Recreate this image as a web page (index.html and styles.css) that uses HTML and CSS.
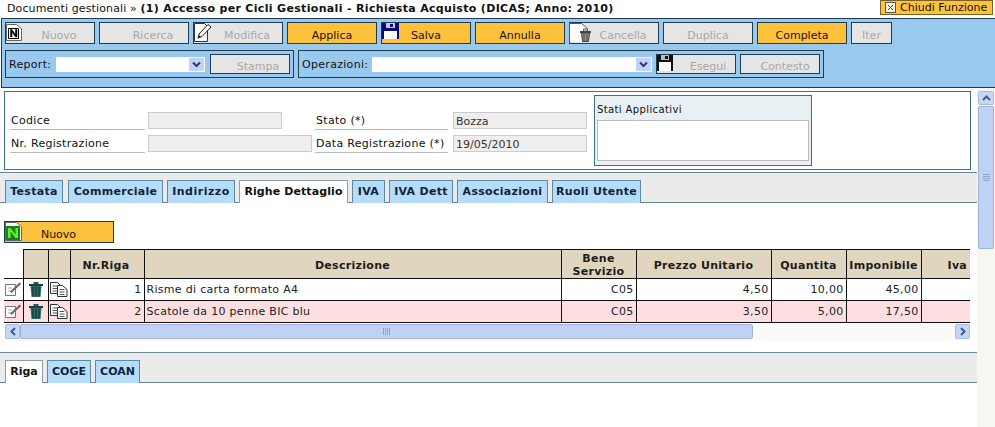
FILE: index.html
```html
<!DOCTYPE html>
<html lang="it">
<head>
    <meta charset="UTF-8">
    <title>Documenti gestionali</title>
    <link rel="stylesheet" href="styles.css">
</head>
<body>
    <div class="top-bar">
        <div class="path">Documenti gestionali &raquo; <b>(1) Accesso per Cicli Gestionali - Richiesta Acquisto (DICAS; Anno: 2010)</b></div>
        <a class="close-link">
            <svg class="close-icon" width="11" height="11" viewBox="0 0 11 11"><rect x=".5" y=".5" width="10" height="10" fill="#f4f1df" stroke="#555"/><path d="M3 3l5 5M8 3l-5 5" stroke="#444" fill="none"/></svg>
            Chiudi Funzione
        </a>
    </div>

    <div class="toolbar">
        <div class="btn-row">
            <button class="btn off text-shift">
                <svg class="ico ico-n" width="16" height="17" viewBox="0 0 16 17"><path d="M.5.5h10l5 4v12H.5z" fill="#fff" stroke="#666"/><path d="M2.500 4.500h10v10h-10z" fill="#fff" stroke="#000"/><path d="M4.500 13V5.500h1.500l3.500 5v-5h1.500V13H9.500L6 8v5z" fill="#000" stroke="#000" stroke-width=".5"/></svg>
                Nuovo
            </button>
            <button class="btn off text-shift">Ricerca</button>
            <button class="btn off text-shift">
                <svg class="ico ico-edit" width="20" height="20" viewBox="0 0 20 20"><path d="M.5.5h10l3 3v15H.5z" fill="#fff" stroke="#333"/><path d="M4 15l1-4L14 1.500l3 2.500-9 9.500z" fill="#fff" stroke="#222"/><path d="M4 15l1-3 2 2z" fill="#222"/></svg>
                Modifica
            </button>
            <button class="btn on">Applica</button>
            <button class="btn on">
                <svg class="ico ico-save" width="17" height="16" viewBox="0 0 17 16"><path d="M0 0h17v16H0z" fill="#0a0a78"/><path d="M4 0h9v5H4z" fill="#c8c8e6"/><path d="M8 1h3v3H8z" fill="#0a0a78"/><path d="M2 8h13v8H2z" fill="#fff"/></svg>
                Salva
            </button>
            <button class="btn on">Annulla</button>
            <button class="btn off text-shift">
                <svg class="ico ico-del" width="23" height="19" viewBox="0 0 23 19"><path d="M.5 18.500V.5h12l6 5" fill="#fff" stroke="#555"/><path d="M1 1h11l6 5v13H1z" fill="#fff"/><path d="M11 8h11v2H11z" fill="#444"/><path d="M14.500 6h4v2h-4z" fill="none" stroke="#555"/><path d="M12.500 10h8l-1 8.500h-6z" fill="#8c8c8c" stroke="#444"/><path d="M15 11v7M18 11v7" stroke="#555"/></svg>
                Cancella
            </button>
            <button class="btn off">Duplica</button>
            <button class="btn on">Completa</button>
            <button class="btn off btn-iter">Iter</button>
        </div>
        <div class="tool-groups">
            <div class="tool-group">
                <span class="tool-label label-report">Report:</span>
                <div class="combo combo-report"><span class="combo-arrow"><svg width="9" height="7" viewBox="0 0 9 7"><path d="M1 1.500l3.500 3.500 3.500-3.500" fill="none" stroke="#2a3f7a" stroke-width="2"/></svg></span></div>
                <button class="btn off btn-small stampa">Stampa</button>
            </div>
            <div class="tool-group">
                <span class="tool-label label-oper">Operazioni:</span>
                <div class="combo combo-oper"><span class="combo-arrow"><svg width="9" height="7" viewBox="0 0 9 7"><path d="M1 1.500l3.500 3.500 3.500-3.500" fill="none" stroke="#2a3f7a" stroke-width="2"/></svg></span></div>
                <button class="btn off btn-small esegui">
                    <svg class="ico ico-exec" width="16" height="16" viewBox="0 0 16 16"><path d="M0 0h16v16H0z" fill="#111"/><path d="M4 0h8v5H4z" fill="#bbb"/><path d="M8 1h3v3H8z" fill="#111"/><path d="M2 7h12v9H2z" fill="#fff"/></svg>
                    Esegui
                </button>
                <button class="btn off btn-small contesto">Contesto</button>
            </div>
        </div>
    </div>

    <div class="page">
        <div class="content">
            <div class="head-form">
                <div class="fields">
                    <div class="field-row">
                        <label class="lbl">Codice</label>
                        <div class="inp inp-code"></div>
                        <label class="lbl lbl-right">Stato (*)</label>
                        <div class="inp inp-state">Bozza</div>
                    </div>
                    <div class="field-row">
                        <label class="lbl">Nr. Registrazione</label>
                        <div class="inp inp-reg"></div>
                        <label class="lbl lbl-right lbl-tight">Data Registrazione (*)</label>
                        <div class="inp inp-state">19/05/2010</div>
                    </div>
                </div>
                <div class="states">
                    <div class="states-title">Stati Applicativi</div>
                    <div class="states-box"></div>
                </div>
            </div>

            <div class="tabs tabs-main">
                <span class="tab">Testata</span>
                <span class="tab">Commerciale</span>
                <span class="tab">Indirizzo</span>
                <span class="tab active">Righe Dettaglio</span>
                <span class="tab">IVA</span>
                <span class="tab">IVA Dett</span>
                <span class="tab">Associazioni</span>
                <span class="tab">Ruoli Utente</span>
            </div>

            <button class="btn on btn-new">
                <svg class="ico ico-green" width="17" height="19" viewBox="0 0 17 19"><path d="M.5.500h11l5 4v14H.5z" fill="#fff" stroke="#666"/><path d="M1 4h14v14H1z" fill="#1c7f1c"/><path d="M3 16V6h2.500l5 6.500V6H13v10h-2.500l-5-6.500V16z" fill="#5ff02a"/></svg>
                Nuovo
            </button>

            <div class="grid-wrap">
                <table class="grid">
                    <colgroup>
                        <col class="c1"><col class="c2"><col class="c3"><col class="c4"><col class="c5"><col class="c6"><col class="c7"><col class="c8"><col class="c9"><col class="c10">
                    </colgroup>
                    <thead>
                        <tr class="head-row">
                            <th class="blank"></th><th></th><th></th>
                            <th class="th-right">Nr.Riga</th>
                            <th>Descrizione</th>
                            <th>Bene<br>Servizio</th>
                            <th>Prezzo Unitario</th>
                            <th>Quantita</th>
                            <th>Imponibile</th>
                            <th class="th-iva">Iva</th>
                        </tr>
                    </thead>
                    <tbody>
                        <tr>
                            <td class="ic"><svg width="16" height="14"><use href="#edit-small"/></svg></td>
                            <td class="ic"><svg width="14" height="15"><use href="#trash-small"/></svg></td>
                            <td class="ic"><svg width="18" height="15"><use href="#copy-small"/></svg></td>
                            <td class="num">1</td>
                            <td>Risme di carta formato A4</td>
                            <td class="num">C05</td>
                            <td class="num">4,50</td>
                            <td class="num">10,00</td>
                            <td class="num">45,00</td>
                            <td></td>
                        </tr>
                        <tr class="pink">
                            <td class="ic"><svg width="16" height="14"><use href="#edit-small"/></svg></td>
                            <td class="ic"><svg width="14" height="15"><use href="#trash-small"/></svg></td>
                            <td class="ic"><svg width="18" height="15"><use href="#copy-small"/></svg></td>
                            <td class="num">2</td>
                            <td>Scatole da 10 penne BIC blu</td>
                            <td class="num">C05</td>
                            <td class="num">3,50</td>
                            <td class="num">5,00</td>
                            <td class="num">17,50</td>
                            <td></td>
                        </tr>
                    </tbody>
                </table>
            </div>

            <div class="hscroll">
                <span class="sb-btn"><svg width="8" height="9" viewBox="0 0 8 9"><path d="M6 1L2.500 4.500 6 8" fill="none" stroke="#3a5a9a" stroke-width="2"/></svg></span>
                <div class="hthumb"><span class="grip-h"></span></div>
                <span class="sb-btn sb-end"><svg width="8" height="9" viewBox="0 0 8 9"><path d="M2 1l3.500 3.500L2 8" fill="none" stroke="#3a5a9a" stroke-width="2"/></svg></span>
            </div>

            <div class="tabs tabs-sub">
                <span class="tab active">Riga</span>
                <span class="tab">COGE</span>
                <span class="tab">COAN</span>
            </div>
        </div>

        <div class="vscroll">
            <span class="sb-btn"><svg width="9" height="8" viewBox="0 0 9 8"><path d="M1 6l3.500-3.500L8 6" fill="none" stroke="#3a5a9a" stroke-width="2"/></svg></span>
            <div class="vthumb"><span class="grip-v"></span></div>
        </div>
    </div>

    <!-- icone delle righe -->
    <svg class="sprites" width="0" height="0">
        <symbol id="edit-small" viewBox="0 0 16 14">
            <path d="M.5 2.500h10v11H.5z" fill="#fff" stroke="#777"/>
            <path d="M3 6h4M3 9h3" stroke="#aaa"/>
            <path d="M5 9.500L13 2l1.500 1.500L6.500 11z" fill="#666"/>
            <path d="M13 2l1.500-1.500L16 2l-1.500 1.500z" fill="#a33"/>
        </symbol>
        <symbol id="trash-small" viewBox="0 0 14 15">
            <path d="M0 2h14v2H0z" fill="#1f3d3d"/>
            <path d="M4.500 0h5v2h-5z" fill="#2f5555"/>
            <path d="M1.500 4h11l-1 11h-9z" fill="#2f6a66"/>
            <path d="M4 5v9M7 5v9M10 5v9" stroke="#102a2a"/>
        </symbol>
        <symbol id="copy-small" viewBox="0 0 18 15">
            <path d="M.5.500h7l3 3v8H.5z" fill="#fff" stroke="#333"/>
            <path d="M2.500 4h5M2.500 6.500h5M2.500 9h5" stroke="#555"/>
            <path d="M7.500 3.500h5l4.500 4v7H7.500z" fill="#fff" stroke="#333"/>
            <path d="M9.500 7.500h5M9.500 10h5M9.500 12.500h5" stroke="#555"/>
        </symbol>
    </svg>
</body>
</html>
```

FILE: styles.css
```css
* {
    box-sizing: border-box;
}

html, body {
    margin: 0;
    height: 427px;
    overflow: hidden;
}

body {
    background-color: #fff;
    color: #111;
    font-family: "DejaVu Sans", Verdana, sans-serif;
    font-size: 11px;
}

/* Barra superiore */
.top-bar {
    display: flex;
    justify-content: space-between;
    height: 18px;
    padding: 2px 2px 0 7px;
}

.path {
    line-height: 14px;
    letter-spacing: 0.12px;
    white-space: nowrap;
}

.path b {
    letter-spacing: 0.33px;
}

.close-link {
    display: flex;
    align-items: center;
    gap: 4px;
    width: 113px;
    height: 15px;
    margin-top: -2px;
    padding-left: 4px;
    background-color: #fdc13c;
    border: 1px solid #7a6220;
    white-space: nowrap;
}

.close-icon {
    flex: none;
}

/* Toolbar */
.toolbar {
    height: 70px;
    margin-left: 1px;
    padding: 3px 3px 0;
    background-color: #99c9ee;
    border: 1px solid #1d3c50;
    border-right: 0;
}

.btn-row {
    display: flex;
    gap: 4px;
}

.btn {
    position: relative;
    width: 90px;
    height: 22px;
    padding: 4px 0 0;
    font-family: inherit;
    font-size: 11px;
    border: 1px solid #1d3c50;
    white-space: nowrap;
}

.btn.on {
    background-color: #fdc13c;
    color: #1a1208;
}

.btn.off {
    background-color: #e5e5e5;
    color: #a8a8a8;
}

.text-shift {
    padding-left: 18px;
}

.btn-iter {
    width: 41px;
}

.ico {
    position: absolute;
    left: 0;
    top: 0;
}

.ico-n {
    top: 1px;
}

.ico-del {
    left: -1px;
    top: 0;
}

.tool-groups {
    display: flex;
    gap: 4px;
    margin-top: 6px;
}

.tool-group {
    display: flex;
    align-items: center;
    height: 28px;
    padding: 0 3px;
    border: 1px solid #1d3c50;
}

.tool-label {
    letter-spacing: 0.3px;
    white-space: nowrap;
}

.label-report {
    width: 47px;
}

.label-oper {
    width: 70px;
}

.combo {
    position: relative;
    height: 15px;
    margin-top: 1px;
    background-color: #fff;
}

.combo-report {
    width: 149px;
    margin-right: 5px;
}

.combo-oper {
    width: 280px;
    margin-right: 4px;
}

.combo-arrow {
    position: absolute;
    top: 1px;
    right: 1px;
    display: flex;
    align-items: center;
    justify-content: center;
    width: 15px;
    height: 13px;
    background-color: #c2d2f2;
}

.btn-small {
    width: 80px;
    height: 20px;
}

.stampa {
    padding-left: 16px;
}

.esegui {
    margin-right: 4px;
    padding-left: 24px;
}

.contesto {
    padding-left: 10px;
}

/* Corpo pagina */
.page {
    display: flex;
    height: 339px;
}

.content {
    width: 977px;
    padding-top: 3px;
    background-color: #fff;
}

.head-form {
    display: flex;
    height: 79px;
    margin-left: 4px;
    width: 967px;
    border: 1px solid #3d7085;
}

.fields {
    width: 589px;
    padding: 20px 0 0 5px;
}

.field-row {
    display: flex;
    height: 23px;
}

.lbl {
    width: 135px;
    height: 18px;
    margin-right: 3px;
    padding: 2px 0 0 1px;
    line-height: 14px;
    letter-spacing: 0.3px;
    border-bottom: 1px solid #bbb;
    white-space: nowrap;
}

.lbl-right {
    margin-left: 33px;
    width: 133px;
    margin-right: 5px;
}

.lbl-tight {
    margin-left: 3px;
}

.inp {
    height: 17px;
    padding: 2px 0 0 2px;
    line-height: 14px;
    color: #333;
    background-color: #eee;
    border: 1px solid #ccc;
}

.inp-code {
    width: 134px;
}

.inp-reg {
    width: 164px;
}

.inp-state {
    width: 134px;
}

.states {
    width: 218px;
    height: 71px;
    margin: 3px 0 0 0;
    padding: 0 2px;
    background-color: #e8f0f3;
    border: 1px solid #3d7085;
}

.states-title {
    height: 24px;
    padding-top: 7px;
    font-size: 10px;
    line-height: 13px;
    letter-spacing: 0.38px;
}

.states-box {
    height: 41px;
    background-color: #fff;
    border: 1px solid #bbb;
}

/* Linguette */
.tabs {
    display: flex;
    gap: 4px;
    align-items: flex-end;
    background-color: #ebebeb;
    border-top: 1px solid #6b8796;
    border-bottom: 1px solid #6b8796;
    padding-left: 5px;
}

.tabs-main {
    height: 31px;
    margin-top: 2px;
}

.tabs-sub {
    height: 31px;
    margin-top: 11px;
}

.tab {
    height: 23px;
    margin-bottom: -1px;
    line-height: 22px;
    text-align: center;
    font-weight: bold;
    letter-spacing: 0.3px;
    color: #10243a;
    background-color: #b6dcfb;
    border: 1px solid #5c8aa3;
    border-bottom: 0;
    white-space: nowrap;
}

.tab.active {
    color: #111;
    background-color: #fff;
    border-color: #8aa0ac;
}

.tabs-main .tab:nth-child(1) { width: 58px; margin-right: 1px; }
.tabs-main .tab:nth-child(2) { width: 95px; }
.tabs-main .tab:nth-child(3) { width: 68px; letter-spacing: 0.5px; }
.tabs-main .tab:nth-child(4) { width: 109px; letter-spacing: 0.1px; }
.tabs-main .tab:nth-child(5) { width: 33px; }
.tabs-main .tab:nth-child(6) { width: 64px; }
.tabs-main .tab:nth-child(7) { width: 91px; }
.tabs-main .tab:nth-child(8) { width: 89px; }

.tabs-sub .tab { letter-spacing: 0; }
.tabs-sub .tab:nth-child(1) { width: 38px; }
.tabs-sub .tab:nth-child(2) { width: 44px; }
.tabs-sub .tab:nth-child(3) { width: 45px; }

/* Griglia righe */
.btn-new {
    display: block;
    width: 110px;
    margin: 18px 0 0 4px;
    padding-right: 1px;
}

.ico-green {
    top: 0;
}

.grid-wrap {
    width: 966px;
    margin: 6px 0 0 4px;
    overflow: hidden;
}

.grid {
    width: 1000px;
    border-collapse: collapse;
    table-layout: fixed;
}

.c1 { width: 19px; }
.c2 { width: 25px; }
.c3 { width: 22px; }
.c4 { width: 74px; }
.c5 { width: 417px; }
.c6 { width: 75px; }
.c7 { width: 135px; }
.c8 { width: 75px; }
.c9 { width: 75px; }
.c10 { width: 83px; }

.grid th, .grid td {
    border-right: 1px solid #111;
    border-bottom: 1px solid #111;
}

.grid th {
    height: 29px;
    padding: 2px 2px 0;
    font-weight: bold;
    line-height: 13px;
    letter-spacing: 0.3px;
    color: #1c1c1c;
    background-color: #e0d6bf;
    border-top: 1px solid #111;
}

.grid th.blank {
    background-color: #fff;
    border-top: 0;
}

.grid th.th-right {
    text-align: right;
    padding-right: 14px;
}

.grid th.th-iva {
    border-right: 0;
    text-align: left;
    padding-left: 26px;
}

.grid td {
    height: 22px;
    padding: 1px 2px 0;
    line-height: 14px;
    letter-spacing: 0.3px;
    color: #222;
}

.grid td.num {
    text-align: right;
}

.grid td.ic {
    padding: 3px 0 0;
    text-align: center;
    vertical-align: top;
    line-height: 0;
}

.grid tr.pink td {
    background-color: #fddfe1;
}

/* Barre di scorrimento */
.hscroll {
    display: flex;
    width: 965px;
    height: 17px;
    margin: 1px 0 0 5px;
    background-color: #fbfafa;
}

.sb-btn {
    display: flex;
    flex: none;
    align-items: center;
    justify-content: center;
    width: 15px;
    height: 15px;
    background-color: #c6d6f4;
    border: 1px solid #a9bcd8;
    border-radius: 2px;
}

.sb-end {
    margin-left: auto;
}

.hthumb {
    display: flex;
    align-items: center;
    justify-content: center;
    width: 733px;
    height: 15px;
    background-color: #bfd2f5;
    border: 1px solid #9fb4d6;
    border-radius: 2px;
}

.grip-h {
    width: 8px;
    height: 7px;
    background: repeating-linear-gradient(90deg, #8ea6d0 0 1px, transparent 1px 2px);
}

.vscroll {
    display: flex;
    flex-direction: column;
    align-items: center;
    width: 18px;
    padding-top: 3px;
    background-color: #f8f6f0;
}

.vscroll .sb-btn {
    width: 16px;
    height: 14px;
}

.vthumb {
    display: flex;
    align-items: center;
    justify-content: center;
    width: 16px;
    height: 143px;
    margin-top: 1px;
    background-color: #bfd2f5;
    border: 1px solid #9fb4d6;
    border-radius: 2px;
}

.grip-v {
    width: 7px;
    height: 7px;
    background: repeating-linear-gradient(0deg, #8ea6d0 0 1px, transparent 1px 2px);
}

.sprites {
    position: absolute;
}
```
